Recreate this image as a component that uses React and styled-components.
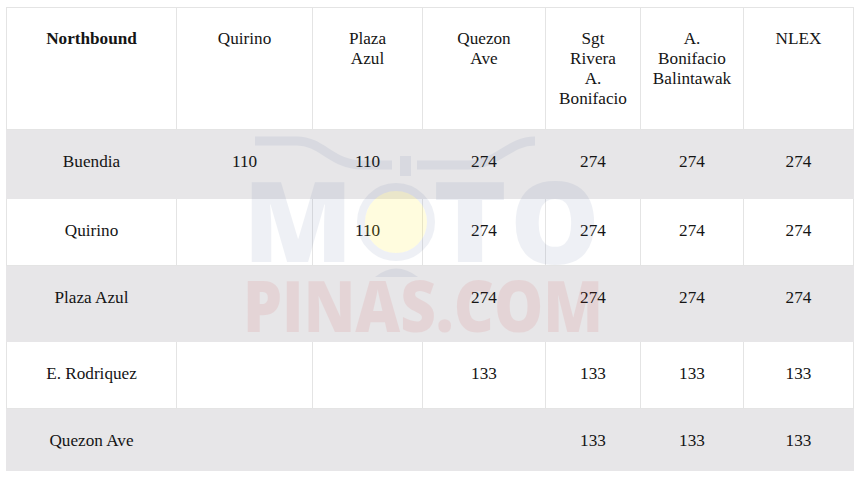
import React from 'react';
import styled, { createGlobalStyle } from 'styled-components';

const GlobalStyle = createGlobalStyle`
    html, body {
        margin: 0;
        padding: 0;
        background: #ffffff;
    }
`;

const columns = [
    { width: 170, lines: ['Northbound'], bold: true },
    { width: 136, lines: ['Quirino'] },
    { width: 110, lines: ['Plaza', 'Azul'] },
    { width: 123, lines: ['Quezon', 'Ave'] },
    { width: 95, lines: ['Sgt', 'Rivera', 'A.', 'Bonifacio'] },
    { width: 103, lines: ['A.', 'Bonifacio', 'Balintawak'] },
    { width: 110, lines: ['NLEX'] },
];

const rows = [
    { name: 'Buendia', height: 69, shaded: true, fares: ['110', '110', '274', '274', '274', '274'] },
    { name: 'Quirino', height: 67, fares: ['', '110', '274', '274', '274', '274'] },
    { name: 'Plaza Azul', height: 76, shaded: true, fares: ['', '', '274', '274', '274', '274'] },
    { name: 'E. Rodriquez', height: 67, fares: ['', '', '133', '133', '133', '133'] },
    { name: 'Quezon Ave', height: 62, shaded: true, fares: ['', '', '', '133', '133', '133'] },
];

// faint site logo laid over the table
const Watermark = () => (
    <Styled.Logo viewBox="0 0 860 477" width="860" height="477" aria-hidden="true">
        <g opacity="0.08" fill="#34508a">
            <g fontFamily="'Open Sans', 'DejaVu Sans', sans-serif" fontWeight="900">
                <text x="243" y="262" fontSize="112" textLength="110" lengthAdjust="spacingAndGlyphs">M</text>
                <text x="433" y="262" fontSize="112" textLength="74" lengthAdjust="spacingAndGlyphs">T</text>
                <text x="510" y="264" fontSize="114" textLength="90" lengthAdjust="spacingAndGlyphs">O</text>
            </g>
            <g fill="none" stroke="#34508a" strokeWidth="9">
                <path d="M255,141 L297,141 C322,141 332,165 362,165 L392,165" />
                <path d="M417,165 L468,165 C498,165 508,141 535,141" />
            </g>
            <rect x="400" y="156" width="11" height="20" />
            <circle cx="396" cy="222" r="35" fill="none" stroke="#34508a" strokeWidth="8" />
            <path d="M375,277 Q396,260 418,277 Z" />
        </g>
        <circle cx="396" cy="222" r="31" fill="#ffe600" opacity="0.13" />
        <text
            x="243"
            y="332"
            fontSize="70"
            textLength="360"
            lengthAdjust="spacingAndGlyphs"
            fill="#d03030"
            opacity="0.09"
            fontFamily="'Open Sans', 'DejaVu Sans', sans-serif"
            fontWeight="900"
        >
            PINAS.COM
        </text>
    </Styled.Logo>
);

const App = () => {
    return (
        <>
            <GlobalStyle />
            <Styled.Page>
                <Styled.Table>
                    <colgroup>
                        {columns.map((c, i) => (
                            <col key={i} style={{ width: c.width }} />
                        ))}
                    </colgroup>
                    <thead>
                        <tr>
                            {columns.map((c, i) => (
                                <Styled.HeadCell key={i} $bold={c.bold}>
                                    {c.lines.map((l, j) => (
                                        <Styled.Line key={j}>{l}</Styled.Line>
                                    ))}
                                </Styled.HeadCell>
                            ))}
                        </tr>
                    </thead>
                    <tbody>
                        {rows.map((r) => (
                            <Styled.Row key={r.name} $shaded={r.shaded} style={{ height: r.height }}>
                                <Styled.Cell $shaded={r.shaded}>{r.name}</Styled.Cell>
                                {r.fares.map((f, i) => (
                                    <Styled.Cell key={i} $shaded={r.shaded}>{f}</Styled.Cell>
                                ))}
                            </Styled.Row>
                        ))}
                    </tbody>
                </Styled.Table>
                <Watermark />
            </Styled.Page>
        </>
    );
};

const Styled = {
    Page: styled.div`
        position: relative;
        width: 860px;
        height: 477px;
        padding: 7px 0 0 6px;
        box-sizing: border-box;
        font-family: "Liberation Serif", LiberationSerif, "DejaVu Serif", "Noto Serif", FreeSerif, serif;
    `,

    Table: styled.table`
        width: 847px;
        border-collapse: collapse;
        table-layout: fixed;
        font-family: inherit;
        font-size: 17.2px;
        line-height: 20px;
        color: #151515;
        border: 1px solid #e4e4e4;
    `,

    HeadCell: styled.th`
        height: 122px;
        box-sizing: border-box;
        padding: 21px 4px 0;
        vertical-align: top;
        text-align: center;
        font-weight: ${(props) => (props.$bold ? 700 : 400)};
        border: 1px solid #e4e4e4;
        background: #ffffff;
    `,

    Line: styled.div`
        white-space: nowrap;
    `,

    Row: styled.tr`
        background: ${(props) => (props.$shaded ? '#e7e6e8' : '#ffffff')};
    `,

    Cell: styled.td`
        box-sizing: border-box;
        padding: 22px 4px 0;
        vertical-align: top;
        text-align: center;
        white-space: nowrap;
        border: 1px solid ${(props) => (props.$shaded ? '#e7e6e8' : '#e4e4e4')};
    `,

    Logo: styled.svg`
        position: absolute;
        top: 0;
        left: 0;
        pointer-events: none;
    `,
};

export default App;
